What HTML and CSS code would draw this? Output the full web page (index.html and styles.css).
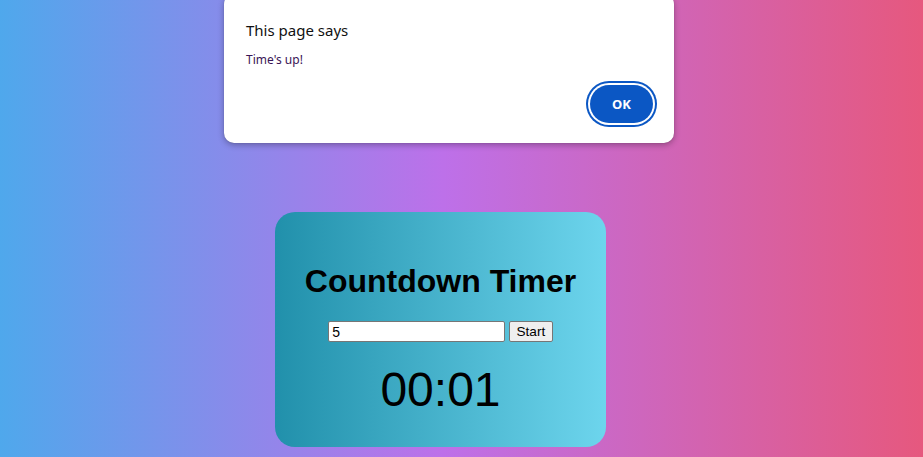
FILE: index.html
```html
<!DOCTYPE html>
<html>
<head>
<meta charset="utf-8">
<link rel="stylesheet" href="styles.css">
</head>
<body>
<div class="page">
  <div class="card">
    <h1 class="title">Countdown Timer</h1>
    <div class="controls">
      <input class="minutes" type="text" value="5"> <button class="start">Start</button>
    </div>
    <div class="timer">00:01</div>
  </div>
</div>
<div class="dialog">
  <div class="dialog-title">This page says</div>
  <div class="dialog-msg">Time's up!</div>
  <div class="dialog-actions">
    <button class="ok">OK</button>
  </div>
</div>
</body>
</html>
```

FILE: styles.css
```css
html, body {
  margin: 0;
  height: 100%;
}
body {
  font-family: "Liberation Sans", Arial, sans-serif;
  background: linear-gradient(to right, #4fa8ec 0%, #bd70e9 48%, #e6587e 100%);
  overflow: hidden;
  position: relative;
}
.page {
  display: flex;
  justify-content: center;
  padding-top: 212px;
  padding-right: 42px;
}
.card {
  background: linear-gradient(to right, #2190ab, #6dd5ed);
  border-radius: 20px;
  padding: 30px;
  text-align: center;
}
.title {
  font-size: 32px;
  font-weight: bold;
  margin: 21px 0 21px;
  color: #000;
}
.controls {
  font-size: 13.333px;
  line-height: 21px;
  white-space: nowrap;
}
.minutes {
  font-family: "Liberation Sans", Arial, sans-serif;
  font-size: 14px;
  width: 177px;
  height: 21px;
  box-sizing: border-box;
  padding: 1px 3px;
  border: 1px solid #767676;
  border-radius: 2px;
  background: #fff;
  vertical-align: top;
  margin: 0;
}
.start {
  font-family: "Liberation Sans", Arial, sans-serif;
  font-size: 13.6px;
  height: 21px;
  width: 44px;
  box-sizing: border-box;
  padding: 1px 4px;
  border: 1px solid #767676;
  border-radius: 2px;
  background: #efefef;
  color: #000;
  vertical-align: top;
  margin: 0;
}
.timer {
  font-size: 48px;
  margin-top: 20px;
  color: #000;
}
.dialog {
  position: absolute;
  left: 224px;
  top: -6px;
  width: 450px;
  height: 149px;
  box-sizing: border-box;
  background: #fff;
  border-radius: 10px;
  box-shadow: 0 2px 6px rgba(0,0,0,0.3), 0 0 1px rgba(0,0,0,0.3);
  padding: 26px 22px 0 22px;
  font-family: "Noto Sans", "Open Sans", sans-serif;
  color: #1f1f1f;
}
.dialog-title {
  font-size: 15px;
  line-height: 20px;
  color: #111;
}
.dialog-msg {
  font-size: 12px;
  line-height: 16px;
  margin-top: 12px;
  color: #3a1555;
}
.dialog-actions {
  display: flex;
  justify-content: flex-end;
  margin-top: 17px;
}
.ok {
  width: 63px;
  height: 38px;
  border-radius: 19px;
  border: none;
  background: #0b57c4;
  color: #fff;
  font-family: "Noto Sans", "Open Sans", sans-serif;
  font-weight: bold;
  font-size: 13px;
  box-shadow: 0 0 0 2px #fff, 0 0 0 4px #0b57c4;
  margin-right: -1px;
}
```
